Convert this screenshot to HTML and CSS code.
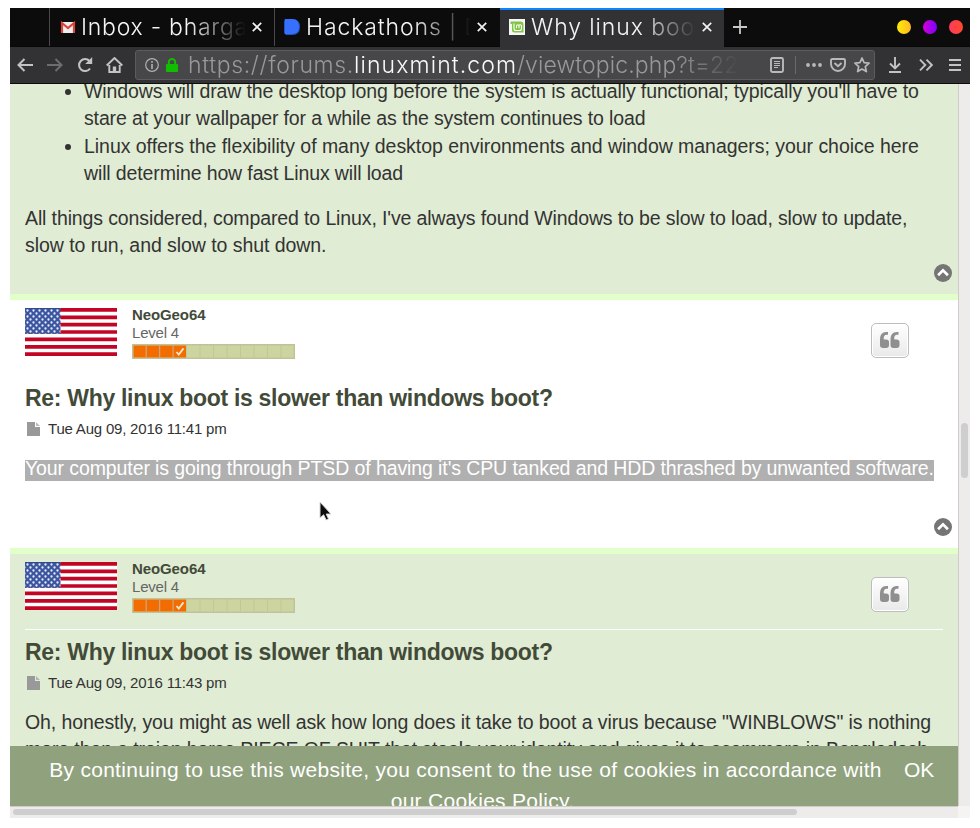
FILE: index.html
```html
<!DOCTYPE html>
<html lang="en">
<head>
<meta charset="utf-8">
<title>Why linux boot is slower than windows boot?</title>
<link rel="stylesheet" href="styles.css">
</head>
<body>
<svg class="defs" width="0" height="0">
  <defs>
    <pattern id="stars" width="6" height="6" patternUnits="userSpaceOnUse" x="1" y="1">
      <rect width="6" height="6" fill="#3b559f"/>
      <circle cx="1.5" cy="1.5" r="1.15" fill="#e7edfa"/><circle cx="4.5" cy="4.5" r="1.15" fill="#e7edfa"/>
    </pattern>
    <symbol id="flag" viewBox="0 0 92 48">
      <rect width="92" height="48" fill="#fff"/>
      <path d="M0 1.9h92M0 9.3h92M0 16.7h92M0 24h92M0 31.4h92M0 38.8h92M0 46.1h92" stroke="#c20524" stroke-width="3.7"/>
      <rect width="35.5" height="25.8" fill="url(#stars)"/>
      <path d="M0 0.5h35.5" stroke="#314a8c"/>
    </symbol>
    <symbol id="rank" viewBox="0 0 163 15">
      <rect width="163" height="15" fill="#c2c29a"/>
      <rect x="1.5" y="1.5" width="160" height="12" fill="#ccd49f"/>
      <rect x="1.5" y="1.5" width="52.5" height="12" fill="#f26c00"/>
      <path d="M14.2 1v13M27.6 1v13M41.1 1v13" stroke="#d0a276" stroke-width="1.3"/>
      <path d="M54.6 1v13M68 1v13M81.5 1v13M95 1v13M108.5 1v13M122 1v13M135.5 1v13M149 1v13" stroke="#c3c796" stroke-width="1"/>
      <path d="M44.5 8l2.3 2.6 4.7-6.2" fill="none" stroke="#fde5cc" stroke-width="1.8"/>
    </symbol>
    <symbol id="page" viewBox="0 0 13 14">
      <path d="M0 0h8v5h5v9H0z" fill="#999"/><path d="M9 0l4 4H9z" fill="#999" opacity=".65"/>
    </symbol>
    <symbol id="up" viewBox="0 0 18 18">
      <circle cx="9" cy="9" r="9" fill="#757575"/>
      <path d="M4.1 11.2L9 6.4l4.9 4.8" fill="none" stroke="#fff" stroke-width="2.7"/>
    </symbol>
    <symbol id="quote" viewBox="0 0 20 16">
      <path d="M9 10.2V13q0 3-3 3H3q-3 0-3-3V7q0-6.700 6.200-7H8v2.800H6.500Q3.800 3 3.700 6.200v.5q0 .8.800.8H6q3 0 3 2.700z" fill="#8f8f8f"/>
      <path transform="translate(10.500 0)" d="M9 10.2V13q0 3-3 3H3q-3 0-3-3V7q0-6.700 6.200-7H8v2.800H6.500Q3.800 3 3.700 6.200v.5q0 .8.800.8H6q3 0 3 2.700z" fill="#8f8f8f"/>
    </symbol>
    <symbol id="x" viewBox="0 0 10 10"><path d="M.8.8l8.400 8.400M9.200.8L.8 9.200" stroke="#f2f2f2" stroke-width="1.7"/></symbol>
  </defs>
</svg>
<div class="window">
  <header class="tabs">
    <div class="pre"></div>
    <div class="tab">
      <svg class="fav" width="16" height="16" viewBox="0 0 16 16"><path d="M1 3h14v11H1z" fill="#eee"/><path d="M2 14V4l6 5 6-5v10" fill="none" stroke="#d9453a" stroke-width="2.200"/></svg>
      <span class="label l1">Inbox - bharga</span>
      <svg class="close" width="10" height="10"><use href="#x"/></svg>
    </div>
    <div class="tab t2">
      <svg class="fav" width="16" height="16" viewBox="0 0 16 16"><path d="M0 2l1-2h7q8 0 8 8t-8 8H2l-2-2z" fill="#2554bd"/><path d="M1 0h7q7 0 7 7.500T8 15H1z" fill="#3770ff"/></svg>
      <span class="label l2">Hackathons | D</span>
      <svg class="close" width="10" height="10"><use href="#x"/></svg>
    </div>
    <div class="tab active">
      <svg class="fav" width="16" height="16" viewBox="0 0 16 16"><path d="M0 0h16v16H0z" fill="#f6f6f6"/><path d="M1.500 2.500h10q3 0 3 3v8H5.500q-2.500 0-2.500-2.500V5H1.500z" fill="#82c445"/><path d="M5 4.500v5q0 2 2 2h3.500q2 0 2-2V7q0-1.300-1.300-1.300T10 7v2.300M10 7q0-1.300-1.200-1.300T7.500 7v2.300" fill="none" stroke="#fff" stroke-width="1.100"/></svg>
      <span class="label l3">Why linux boot</span>
      <svg class="close" width="10" height="10"><use href="#x"/></svg>
    </div>
    <svg class="plus" width="14" height="14"><path d="M7 0v14M0 7h14" stroke="#c8c8c8" stroke-width="1.800"/></svg>
    <div class="dots"><i class="y"></i><i class="p"></i><i class="r"></i></div>
  </header>
  <nav class="bar">
    <svg class="n1" width="16" height="14" viewBox="0 0 16 14" fill="none" stroke="#c3c3c4" stroke-width="2"><path d="M16 7H1.500M7.500 1l-6 6 6 6"/></svg>
    <svg class="n2" width="16" height="14" viewBox="0 0 16 14" fill="none" stroke="#6d6d6f" stroke-width="2"><path d="M0 7h14.500M8.500 1l6 6-6 6"/></svg>
    <svg class="n3" width="16" height="16" viewBox="0 0 16 16"><path d="M13 11.500A6 6 0 1 1 12.500 4" fill="none" stroke="#c3c3c4" stroke-width="2.100"/><path d="M15.200 0v7H8.200z" fill="#c3c3c4"/></svg>
    <svg class="n4" width="17" height="16" viewBox="0 0 17 16" fill="none" stroke="#c3c3c4" stroke-width="1.900"><path d="M.7 8.500L8.500 1l7.800 7.500M3.300 8v7h10.400V8"/><path d="M8.500 15V9.500" stroke-width="3.400"/></svg>
    <div class="url">
      <svg width="14" height="14" viewBox="0 0 14 14"><circle cx="7" cy="7" r="6.300" fill="none" stroke="#b1b1b3" stroke-width="1.200"/><path d="M7 3v1.700M7 6v5" stroke="#b1b1b3" stroke-width="1.600"/></svg>
      <svg class="lock" width="12" height="14" viewBox="0 0 12 14"><path d="M2.800 7V4.200a3.200 3.200 0 0 1 6.400 0V7" fill="none" stroke="#12bc00" stroke-width="2"/><rect y="6" width="12" height="8" rx="1" fill="#12bc00"/></svg>
      <div class="address"><span class="u1">https://forums.</span><span class="u2">linuxmint.com</span><span class="u3">/viewtopic.php?t=22</span></div>
      <svg class="reader" width="14" height="16" viewBox="0 0 14 16" fill="none" stroke="#b9b9ba"><rect x="1" y="1" width="12" height="14" rx="1.500" stroke-width="1.900"/><path d="M4 4.500h6M4 6.500h6M4 8.500h6M4 10.500h4" stroke-width="1"/></svg>
      <i class="sep"></i>
      <svg class="more" width="16" height="4" fill="#b9b9ba"><circle cx="2" cy="2" r="1.900"/><circle cx="8" cy="2" r="1.900"/><circle cx="14" cy="2" r="1.900"/></svg>
      <svg class="pocket" width="16" height="14" viewBox="0 0 16 14" fill="none" stroke="#b9b9ba" stroke-width="1.900"><path d="M2.300 1h11.400Q15 1 15 2.300V6a7 7 0 0 1-14 0V2.300Q1 1 2.300 1z"/><path d="M4.500 5L8 8.300 11.500 5"/></svg>
      <svg class="star" width="16" height="16" viewBox="0 0 16 16" fill="none" stroke="#b9b9ba" stroke-width="1.700" stroke-linejoin="round"><path d="M8 1l2.100 4.700 5 .5-3.800 3.400 1.100 5L8 12l-4.400 2.600 1.100-5L.9 6.200l5-.5z"/></svg>
    </div>
    <svg class="dl" width="14" height="16" viewBox="0 0 14 16" fill="none" stroke="#c3c3c4" stroke-width="1.900"><path d="M7 0v11M2 6.500l5 5 5-5M1 15h12"/></svg>
    <svg class="chev" width="14" height="12" viewBox="0 0 14 12" fill="none" stroke="#c3c3c4" stroke-width="1.900"><path d="M1 .7L6.300 6 1 11.300M7.500.7L12.800 6l-5.300 5.300"/></svg>
    <svg class="menu" width="12" height="12" stroke="#c3c3c4" stroke-width="2"><path d="M0 1h12M0 6h12M0 11h12"/></svg>
  </nav>
  <div class="view">
    <main class="page">
      <section class="post green first">
        <ul class="text">
          <li><span class="ln a1">Windows will draw the desktop long before the system is actually functional; typically you'll have to</span><span class="ln a2">stare at your wallpaper for a while as the system continues to load</span></li>
          <li><span class="ln a3">Linux offers the flexibility of many desktop environments and window managers; your choice here</span><span class="ln a4">will determine how fast Linux will load</span></li>
        </ul>
        <p class="text"><span class="ln a5">All things considered, compared to Linux, I've always found Windows to be slow to load, slow to update,</span><span class="ln a6">slow to run, and slow to shut down.</span></p>
        <svg class="up" width="18" height="18"><use href="#up"/></svg>
      </section>
      <section class="post white">
        <div class="profile">
          <svg width="92" height="48"><use href="#flag"/></svg>
          <div class="who"><b>NeoGeo64</b><span>Level 4</span><svg width="163" height="15"><use href="#rank"/></svg></div>
          <div class="quote"><svg width="20" height="16"><use href="#quote"/></svg></div>
        </div>
        <div class="rule"></div>
        <h3>Re: Why linux boot is slower than windows boot?</h3>
        <div class="date"><svg width="13" height="14"><use href="#page"/></svg><span>Tue Aug 09, 2016 11:41 pm</span></div>
        <p class="text"><span class="ln a7"><mark>Your computer is going through PTSD of having it's CPU tanked and HDD thrashed by unwanted software.</mark></span></p>
        <svg class="up" width="18" height="18"><use href="#up"/></svg>
        <svg class="cursor" width="13" height="20" viewBox="0 0 13 20"><path d="M1 1v16l3.600-3.300L7.200 19l2.300-1.100L7.200 13H12z" fill="#0c0c0c" stroke="#d5d5d5" stroke-width="1"/></svg>
      </section>
      <section class="post green last">
        <div class="profile">
          <svg width="92" height="48"><use href="#flag"/></svg>
          <div class="who"><b>NeoGeo64</b><span>Level 4</span><svg width="163" height="15"><use href="#rank"/></svg></div>
          <div class="quote"><svg width="20" height="16"><use href="#quote"/></svg></div>
        </div>
        <div class="rule"></div>
        <h3>Re: Why linux boot is slower than windows boot?</h3>
        <div class="date"><svg width="13" height="14"><use href="#page"/></svg><span>Tue Aug 09, 2016 11:43 pm</span></div>
        <p class="text"><span class="ln a8">Oh, honestly, you might as well ask how long does it take to boot a virus because "WINBLOWS" is nothing</span><span class="ln a9">more than a trojan horse PIECE OF SHIT that steals your identity and gives it to scammers in Bangladesh.</span></p>
      </section>
      <aside class="cookies"><div class="msg"><span class="c1">By continuing to use this website, you consent to the use of cookies in accordance with</span><span class="c2">our Cookies Policy.</span></div><span class="ok">OK</span></aside>
    </main>
    <div class="vscroll"><i></i></div>
    <div class="hscroll"><i></i></div>
    <div class="corner"></div>
  </div>
</div>
</body>
</html>
```
FILE: styles.css
```css
* { box-sizing: border-box; }
body { margin: 0; background: #fff; font-family: "Liberation Sans", sans-serif; }
svg { display: block; flex: none; }
.defs { position: absolute; }
.window { width: 960px; height: 810px; margin: 8px 10px 10px; overflow: hidden; display: flex; flex-direction: column; }

.tabs { height: 39px; background: #0c0c0c; display: flex; align-items: stretch; font-family: Inter, sans-serif; font-weight: 300; border-bottom: 1px solid #080808; }
.pre { width: 39px; }
.tab { width: 225px; border-left: 1px solid #4a4a4c; display: flex; align-items: center; padding-left: 10px; color: #f5f5f5; }
.tab.t2 { width: 226px; padding-left: 9px; }
.tab.active { background: #323234; border-left: 0; border-top: 2px solid #0a84ff; width: 224px; padding: 0 0 3px 9px; height: 39px; }
.label { width: 165px; height: 30px; line-height: 30px; font-size: 23px; margin-left: 5px; white-space: nowrap; overflow: hidden; -webkit-mask-image: linear-gradient(90deg, #000 65%, transparent 100%); mask-image: linear-gradient(90deg, #000 65%, transparent 100%); }
.l1 { letter-spacing: .75px; }
.l2 { margin-left: 6px; letter-spacing: .9px; }
.l3 { margin-left: 6px; letter-spacing: .9px; }
.close { margin-left: 6px; }
.plus { margin: 12px 0 0 9px; }
.dots { margin: 12px 7px 0 auto; display: flex; gap: 12px; }
.dots i { width: 14px; height: 14px; border-radius: 50%; }
.y { background: linear-gradient(90deg, #fe0, #ffb629); }
.p { background: linear-gradient(90deg, #d400d4, #7c00ff); }
.r { background: linear-gradient(90deg, #ff3a5e, #ff4a2a); }

.bar { height: 37px; background: #323234; border-bottom: 1px solid #0c0c0d; display: flex; align-items: center; padding-left: 7px; }
.n2 { margin-left: 14px; }
.n3 { margin-left: 14px; }
.n4 { margin-left: 13px; }
.url { width: 740px; height: 30px; margin-left: 12px; background: #474749; border: 1px solid #5c5c5e; border-radius: 3px; display: flex; align-items: center; padding-left: 9px; }
.lock { margin-left: 7px; }
.address { width: 552px; height: 28px; margin-left: 10px; display: flex; overflow: hidden; white-space: nowrap; font: 300 23px/29px Inter, sans-serif; color: #98989a; -webkit-mask-image: linear-gradient(90deg, #000 88%, transparent 100%); mask-image: linear-gradient(90deg, #000 88%, transparent 100%); }
.u1 { width: 166px; flex: none; letter-spacing: .65px; }
.u2 { width: 163px; flex: none; color: #f9f9fa; letter-spacing: 1.1px; }
.u3 { letter-spacing: .1px; }
.reader { margin-left: 30px; }
.sep { width: 1px; height: 18px; background: #6a6a6c; margin-left: 11px; }
.more { margin-left: 10px; }
.pocket { margin-left: 8px; }
.star { margin-left: 8px; }
.dl { margin-left: 13px; }
.chev { margin-left: 17px; }
.menu { margin-left: 16px; }

.view { width: 960px; height: 734px; display: grid; grid-template-columns: 948px 12px; grid-template-rows: 722px 12px; }
.page { position: relative; overflow: hidden; background: #fff; }
.post { position: relative; padding: 8px 15px 0; }
.green { background: #e0ecd3; }
.first { height: 210px; padding-top: 0; overflow: hidden; }
.white { height: 254px; border-top: 6px solid #e1ffc8; }
.last { height: 264px; border-top: 6px solid #e1ffc8; }
.text { margin: 0; font-size: 19.5px; line-height: 27.3px; color: #333; }
.ln { display: block; white-space: nowrap; letter-spacing: -.1px; }
.a1, .a5 { letter-spacing: -.12px; }
.a2, .a4 { letter-spacing: -.13px; }
.a3 { letter-spacing: -.04px; }
.a6 { letter-spacing: -.06px; }
ul.text { padding-left: 59px; margin-top: -6px; }
ul.text + p { margin-top: 18px; }
.up { position: absolute; right: 6px; bottom: 12px; }
.profile { display: flex; height: 67px; }
.who { margin-left: 15px; font-size: 15px; line-height: 18px; color: #666; letter-spacing: -.2px; }
.who b, .who span { display: block; }
.who b { color: #424a38; margin-top: -2px; letter-spacing: -.1px; }
.who svg { margin-top: 2px; }
.quote { width: 38px; height: 35px; margin: 15px 34px 0 auto; padding-bottom: 1px; border: 1px solid #bdbdbd; border-radius: 5px; background: linear-gradient(#fff, #e9e9e9); box-shadow: inset 0 0 0 1px #fff; display: flex; align-items: center; justify-content: center; }
.rule { height: 1px; background: #fff; }
h3 { margin: 8px 0 0; font-size: 23px; line-height: 28px; color: #424a38; white-space: nowrap; letter-spacing: -.3px; }
.date { display: flex; align-items: center; margin: 7px 0 0 2px; height: 18px; font-size: 15px; letter-spacing: -.2px; color: #333; }
.date svg { margin-top: 1px; }
.date span { margin-left: 8px; white-space: nowrap; }
.date + .text { margin-top: 18px; }
.a7 { padding-top: 5px; height: 27px; display: flex; }
mark { display: block; height: 21px; line-height: 17px; background: #b0b0b0; color: #fff; }
.cursor { position: absolute; left: 309px; top: 201px; }
.cookies { position: absolute; left: 0; top: 662px; width: 948px; height: 60px; background: #90a17e; color: #fff; font-size: 21px; line-height: 31px; display: flex; padding-top: 8px; overflow: hidden; white-space: nowrap; letter-spacing: .285px; }
.msg { width: 833px; margin-left: 39px; display: flex; flex-direction: column; align-items: center; flex: none; }
.c2 { padding-left: 34px; }
.ok { margin-left: 22px; letter-spacing: 0; }
.vscroll { background: #edeceb; border-left: 1px solid #cfcbc8; padding: 339px 0 0 2px; }
.vscroll i { display: block; width: 7px; height: 55px; border-radius: 4px; background: #cecece; }
.hscroll { background: #edeceb; border-top: 1px solid #cfcbc8; padding: 2px 0 0 3px; }
.hscroll i { display: block; width: 784px; height: 6px; border-radius: 3px; background: #cecece; }
.corner { background: #f5f4f3; }
```
